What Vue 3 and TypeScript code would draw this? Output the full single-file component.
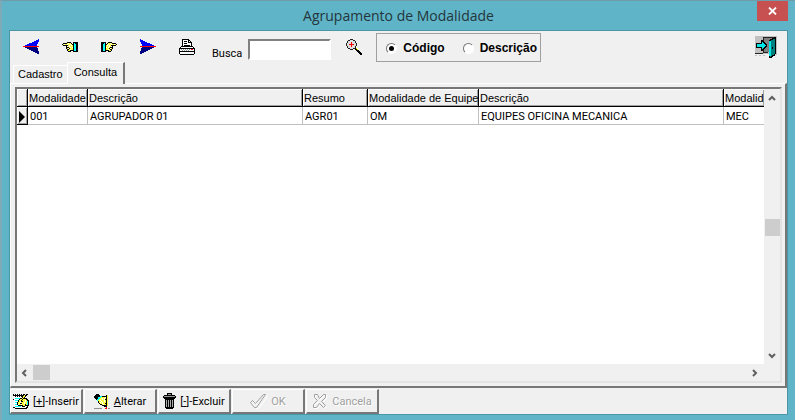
<script setup lang="ts">
import { ref } from 'vue'

interface Column { title: string; value: string; width: string }
interface Layer { fill: string; d: string }

const columns: Column[] = [
  { title: 'Modalidade', value: '001', width: '60px' },
  { title: 'Descrição', value: 'AGRUPADOR 01', width: '215px' },
  { title: 'Resumo', value: 'AGR01', width: '65px' },
  { title: 'Modalidade de Equipe', value: 'OM', width: '111px' },
  { title: 'Descrição', value: 'EQUIPES OFICINA MECANICA', width: '245px' },
  { title: 'Modalid', value: 'MEC', width: 'auto' },
]
const order = ref<'codigo' | 'descricao'>('codigo')
const search = ref('')
const tab = ref<'cadastro' | 'consulta'>('consulta')

const palette: Record<string, string> = {
  k: '#000', w: '#fff', y: '#ffff40', c: '#00ffff', b: '#000080', r: '#f00', g: '#909090',
}

// Turns rows of colour letters into one path per colour.
function pixels(rows: string[]): Layer[] {
  return Object.entries(palette).map(([key, fill]) => ({
    fill,
    d: rows.map((row, y) => [...row].map((p, x) => (p === key ? `M${x} ${y}h1v1h-1z` : '')).join('')).join(''),
  }))
}

const hand = pixels([
  '.....kkkk..kkkkk',
  '.kkkkywyyk.kckkk',
  'kywyywyywykkcckk',
  '.kkkkkywywykcckk',
  '....kwywyyykcckk',
  '....kkkywywkcckk',
  '....kywkyyykcckk',
  '.....kkywyykcckb',
  '.....kyykkkkcckk',
  '......kkk..kkkkk',
])

const insertIcon = pixels([
  'k.k.k.k.k.kk.kk.',
  'kkkkkkkkkkkykk..',
  '.wkwkwkwkkyyk...',
  '.wwwwwwwwkyk....',
  '.wccccckkykkkk..',
  'kwwwwwkyykyyykk.',
  '.wccckyykyyywykk',
  '.wwwwkywkkyywyck',
  '.wcckyywyyywyyck',
  '.wwwkyykkyywyyck',
  '.wcckwyywyyykyck',
  '.wwwwkkkkkyykkkk',
  '.wccccccwkkkwwk.',
  'kkwwwwwwwwwwwkk.',
  '..kkkkkkkkkkkk..',
])

const editIcon = pixels([
  '..kkk...........',
  '.kkkkk......ky..',
  'kkkkkkcckkkkky..',
  'kkkkcccyyyywky..',
  '.kkkccyywywyky..',
  '..kccyyywywkky..',
  '...cyywyyywyky..',
  '....kyywyywyky..',
  '....kywywyyyky..',
  '.....kyywyykky..',
  '......kkywyyky..',
  '........kkkkky..',
  '..........kkk...',
  '............r...',
  'gggggggg...rr.gg',
])
</script>

<template>
  <main class="window">
    <header class="titlebar">
      <h1>Agrupamento de Modalidade</h1>
      <button class="close" aria-label="Fechar">
        <svg width="9" height="8" viewBox="0 0 9 8"><path d="M1 0.5 8 7.5M8 0.5 1 7.5" stroke="#fff" stroke-width="1.8" /></svg>
      </button>
    </header>

    <section class="client">
      <div class="toolbar">
        <button class="tool" aria-label="Primeiro">
          <svg width="16" height="16" viewBox="0 0 16 16" shape-rendering="crispEdges">
            <path d="M16 0v3h-1v2h-1v2H2V6h2V5h2V4h3V3h2V2h2V1h2V0z" fill="#00f" />
            <path d="M2 8h12v1h1v3h1v3h-2v-1h-2v-1h-2v-1H8v-1H6v-1H4V9H2z" fill="#000080" />
            <path d="M0 7h16v1H0z" fill="#f00" />
          </svg>
        </button>
        <button class="tool" aria-label="Anterior">
          <svg width="16" height="10" viewBox="0 0 16 10" shape-rendering="crispEdges">
            <path v-for="l in hand" :key="l.fill" :d="l.d" :fill="l.fill" />
          </svg>
        </button>
        <button class="tool" aria-label="Próximo">
          <svg class="mirrored" width="16" height="10" viewBox="0 0 16 10" shape-rendering="crispEdges">
            <path v-for="l in hand" :key="l.fill" :d="l.d" :fill="l.fill" />
          </svg>
        </button>
        <button class="tool" aria-label="Último">
          <svg class="mirrored" width="16" height="16" viewBox="0 0 16 16" shape-rendering="crispEdges">
            <path d="M16 0v3h-1v2h-1v2H2V6h2V5h2V4h3V3h2V2h2V1h2V0z" fill="#00f" />
            <path d="M2 8h12v1h1v3h1v3h-2v-1h-2v-1h-2v-1H8v-1H6v-1H4V9H2z" fill="#000080" />
            <path d="M0 7h16v1H0z" fill="#f00" />
          </svg>
        </button>
        <button class="tool" aria-label="Imprimir">
          <svg width="16" height="16" viewBox="0 0 16 16" shape-rendering="crispEdges">
            <path d="M3 0h7v1h1v1h1v1h1v4h1v1h1v1h1v6h-1v1H1v-1H0V9h1V8h1V7h1z" fill="#000" />
            <path d="M4 1h5v3h3v3H4zM2 8h12v1H2zM1 10h14v2H1zM1 13h14v2H1zM10 2h1v1h-1z" fill="#fff" />
            <path d="M5 2h3v1H5zM5 4h3v1H5zM5 6h6v1H5z" fill="#000" />
            <path d="M2 10h1v1H2zM4 10h1v1H4zM6 10h1v1H6zM8 10h1v1H8zM10 10h1v1h-1zM3 11h1v1H3zM5 11h1v1H5zM7 11h1v1H7zM9 11h1v1H9z" fill="#999" />
            <path d="M12 10h2v1h-2z" fill="#f00" />
          </svg>
        </button>
        <label class="search">Busca <input v-model="search" type="text" /></label>
        <button class="tool find" aria-label="Pesquisar">
          <svg width="16" height="16" viewBox="0 0 16 16" shape-rendering="crispEdges">
            <path d="M4 0h3v1h2v1h1v2h1v3h-1v2H9v1H7v1H4v-1H2V9H1V7H0V4h1V2h1V1h2z" fill="#222" />
            <path d="M4 1h3v1h2v2h1v3H9v2H7v1H4V9H2V7H1V4h1V2h2z" fill="#ddd" />
            <path d="M5 3h1v2h2v1H6v2H5V6H3V5h2z" fill="#f00" />
            <path d="M9 9h2v1h1v1h1v1h1v1h1v1h1v2h-2v-1h-1v-1h-1v-1h-1v-1h-1v-1H9z" fill="#000" />
            <path d="M10 9h1v1h-1zM11 10h1v1h-1z" fill="#ff0" />
          </svg>
        </button>
        <div class="order" role="radiogroup" aria-label="Ordem">
          <label><input v-model="order" type="radio" name="ordem" value="codigo" />Código</label>
          <label><input v-model="order" type="radio" name="ordem" value="descricao" />Descrição</label>
        </div>
        <button class="exit" aria-label="Sair">
          <svg width="22" height="22" viewBox="0 0 22 22" shape-rendering="crispEdges">
            <path d="M0 0h22v18H0z" fill="#c0c0c0" />
            <path d="M8 1h12v15H8z" fill="#808080" /><path d="M8 1h12v1H9v4H8zM8 13h1v3h4v1H8zM0 17h8v1H0z" fill="#222" />
            <path d="M14 4h1V3h2V2h2V1h1v17h-1v1h-2v1h-1v1h-2z" fill="#008080" stroke="#000" />
            <path d="M14 5h2v15h-2z" fill="#00e5e5" /><path d="M17 11h1v2h-1z" fill="#000" />
            <path d="M1 7h5V4h1v1h1v1h1v1h1v1h1v2h-1v1H9v1H8v1H7v1H6v-3H1z" fill="#00e5e5" stroke="#000" />
            <path d="M0 19h2v1H0zM4 19h2v1H4zM8 19h2v1H8zM20 18h2v1h-2z" fill="#c0c0c0" />
          </svg>
        </button>
      </div>

      <div class="tabs" role="tablist">
        <button role="tab" :aria-selected="tab === 'cadastro'" :class="{ active: tab === 'cadastro' }" @click="tab = 'cadastro'">Cadastro</button>
        <button role="tab" :aria-selected="tab === 'consulta'" :class="{ active: tab === 'consulta' }" @click="tab = 'consulta'">Consulta</button>
      </div>

      <div class="page">
        <div class="grid">
          <div class="viewport">
            <table>
              <colgroup>
                <col class="marker-col" />
                <col v-for="(c, i) in columns" :key="i" :style="{ width: c.width }" />
              </colgroup>
              <thead>
                <tr><th></th><th v-for="(c, i) in columns" :key="i">{{ c.title }}</th></tr>
              </thead>
              <tbody>
                <tr>
                  <th class="marker"><svg width="6" height="12" viewBox="0 0 6 12"><path d="M0 0 6 6 0 12z" /></svg></th>
                  <td v-for="(c, i) in columns" :key="i">{{ c.value }}</td>
                </tr>
              </tbody>
            </table>
          </div>
          <div class="vbar">
            <svg width="8" height="6" viewBox="0 0 8 6"><path d="M1 5 4 2 7 5" /></svg>
            <span class="thumb"></span>
            <svg width="8" height="6" viewBox="0 0 8 6"><path d="M1 1 4 4 7 1" /></svg>
          </div>
          <div class="hbar">
            <svg width="6" height="8" viewBox="0 0 6 8"><path d="M5 1 2 4 5 7" /></svg>
            <span class="thumb"></span>
            <svg width="6" height="8" viewBox="0 0 6 8"><path d="M1 1 4 4 1 7" /></svg>
          </div>
        </div>
      </div>

      <footer class="actions">
        <button>
          <svg width="16" height="15" viewBox="0 0 16 15" shape-rendering="crispEdges">
            <path v-for="l in insertIcon" :key="l.fill" :d="l.d" :fill="l.fill" />
          </svg>
          <span>[<u>+</u>]-Inserir</span>
        </button>
        <button>
          <svg width="16" height="15" viewBox="0 0 16 15" shape-rendering="crispEdges">
            <path v-for="l in editIcon" :key="l.fill" :d="l.d" :fill="l.fill" />
          </svg>
          <span><u>A</u>lterar</span>
        </button>
        <button>
          <svg width="13" height="16" viewBox="0 0 13 16" shape-rendering="crispEdges">
            <path d="M4 0h5v2h3v1h1v2h-1v1h-1v9h-1v1H3v-1H2V6H1V5H0V3h1V2h3z" fill="#000" /><path d="M5 1h3v1H5zM1 3h11v1H1z" fill="#999" />
            <path d="M3 7h1v7H3zM5 7h1v7H5zM7 7h1v7H7zM9 7h1v7H9z" fill="#aaa" />
          </svg>
          <span>[<u>-</u>]-Excluir</span>
        </button>
        <button disabled>
          <svg width="17" height="16" viewBox="0 0 17 16"><g fill="none"><path d="M1.5 9.5 3.5 7.5 6.5 10.5 14.5 1.5 16.5 2.5 7.5 14.5 5.5 14.5z" stroke="#fff" transform="translate(1 1)" /><path d="M.5 9.5 2.5 7.5 5.5 10.5 13.5 1.5 15.5 1.5 6.5 14.5 4.5 14.5z" stroke="#a0a0a0" /></g></svg>
          <span>OK</span>
        </button>
        <button disabled>
          <svg width="16" height="16" viewBox="0 0 16 16"><g fill="none"><path d="M2.5 1.5H5.5L7.5 5.5 11.5 1.5H13.5V4.5L9.5 8.5 13.5 12.5 11.5 14.5 7.5 10.5 4.5 14.5H1.5V11.5L5.5 7.5 2.5 4.5z" stroke="#fff" transform="translate(1 1)" /><path d="M2.5 1.5H5.5L7.5 5.5 11.5 1.5H13.5V4.5L9.5 8.5 13.5 12.5 11.5 14.5 7.5 10.5 4.5 14.5H1.5V11.5L5.5 7.5 2.5 4.5z" stroke="#a0a0a0" /></g></svg>
          <span>Cancela</span>
        </button>
      </footer>
    </section>
  </main>
</template>

<style>
body { margin: 0; }
</style>

<style scoped>
* { box-sizing: border-box; }
button { margin: 0; padding: 0; border: 0; background: none; color: #000; font: inherit; }
svg { display: block; flex: none; }
.mirrored { transform: scaleX(-1); }

.window {
  display: flex;
  flex-direction: column;
  height: 100vh;
  padding: 0 7px 5px;
  border: solid;
  border-width: 1px 0 0 2px;
  border-color: #6f9ca8 #6f9ca8 #6f9ca8 #7fa9b6;
  background: #5fb4c8;
  font: 11px/13px Roboto, "Liberation Sans", sans-serif;
  color: #000;
}
.titlebar {
  display: grid;
  grid-template-columns: 1fr auto 1fr;
  height: 29px;
  flex: none;
}
.titlebar h1 {
  grid-column: 2;
  margin: 0;
  font: 14px/30px "Open Sans", sans-serif;
  color: #24363b;
}
.close {
  display: grid;
  place-items: center;
  justify-self: end;
  width: 31px;
  height: 20px;
  background: #c75050;
}
.client {
  display: flex;
  flex: 1;
  flex-direction: column;
  min-height: 0;
  border: 1px solid #4a95a6;
  background: #f0f0f0;
}
.toolbar {
  display: flex;
  align-items: center;
  height: 32px;
  flex: none;
  padding-left: 13px;
}
.tool { display: grid; place-items: center; width: 16px; height: 32px; margin-right: 23px; }
.search { display: flex; align-items: flex-end; gap: 6px; margin-left: -6px; padding-top: 4px; }
.search input {
  width: 83px;
  height: 21px;
  border: 2px solid;
  border-color: #808080 #fff #fff #808080;
  background: #fff;
  font: inherit;
  outline: none;
}
.find { margin: 0 14px 0 15px; }
.order {
  display: flex;
  align-items: center;
  gap: 18px;
  height: 29px;
  padding: 0 3px 0 9px;
  border: 1px solid #a0a0a0;
  font: 700 12px/14px "Liberation Sans", sans-serif;
}
.order label { display: flex; align-items: center; gap: 6px; padding-top: 2px; }
.order input {
  display: grid;
  place-items: center;
  width: 11px;
  height: 11px;
  margin: 0;
  appearance: none;
  border: 1px solid;
  border-color: #777 #fff #fff #777;
  border-radius: 50%;
  background: #fff;
}
.order input:checked::before { content: ""; width: 5px; height: 5px; border-radius: 50%; background: #000; }
.exit { margin: 0 10px 0 auto; }

.tabs { display: flex; align-items: flex-end; height: 20px; flex: none; padding-left: 3px; font-family: "Liberation Sans", sans-serif; }
.tabs button { height: 18px; padding: 0 4px; border: solid #fff; border-width: 1px 0 0 1px; }
.tabs .active {
  position: relative;
  z-index: 1;
  height: 22px;
  padding: 0 6px 3px;
  margin-bottom: -1px;
  border-right: 2px solid #777;
  background: #f0f0f0;
}
.page {
  display: flex;
  flex: 1;
  min-height: 0;
  padding: 3px 3px 3px 4px;
  border: solid;
  border-width: 1px 2px 2px 1px;
  border-color: #fff #777 #777 #fff;
}
.grid {
  display: grid;
  flex: 1;
  grid-template: 1fr 17px / minmax(0, 1fr) 16px;
  border: 2px solid;
  border-color: #777 #e3e3e3 #e3e3e3 #777;
  background: #f0f0f0;
}
.viewport { overflow: hidden; background: #fff; }
table { width: 100%; table-layout: fixed; border-collapse: separate; border-spacing: 0; }
.marker-col { width: 11px; }
th, td { height: 18px; padding: 2px 0 0 2px; overflow: hidden; text-align: left; white-space: nowrap; font-weight: 400; border: solid #c0c0c0; border-width: 0 1px 1px 0; }
thead th, .marker { border-color: #000; background: #f0f0f0; box-shadow: inset 1px 1px #fff, inset -1px -1px #a0a0a0; }
thead th { padding-left: 1px; font-family: "Liberation Sans", sans-serif; }
tr > :last-child { border-right: 0; }
.vbar, .hbar { display: flex; align-items: center; }
.vbar { flex-direction: column; padding: 6px 0 5px; }
.vbar .thumb { width: 15px; height: 17px; margin: auto 0; }
.hbar { padding: 0 6px 0 4px; }
.hbar .thumb { width: 17px; height: 15px; margin: 0 auto 0 6px; }
.thumb { background: #cdcdcd; }
.vbar path, .hbar path { fill: none; stroke: #606060; stroke-width: 2; }

.actions { display: flex; gap: 1px; height: 26px; flex: none; padding-top: 1px; }
.actions button {
  display: flex;
  align-items: center;
  justify-content: center;
  gap: 4px;
  width: 73px;
  border: solid;
  border-width: 1px 2px 2px 1px;
  border-color: #fff #777 #777 #fff;
  white-space: nowrap;
}
.actions button:disabled { color: #a0a0a0; text-shadow: 1px 1px #fff; }
</style>
